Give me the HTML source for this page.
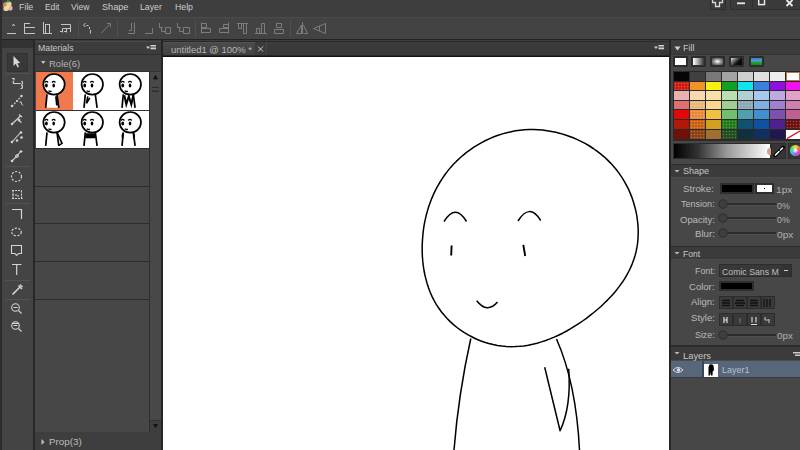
<!DOCTYPE html>
<html><head><meta charset="utf-8">
<style>
*{margin:0;padding:0;box-sizing:border-box}
html,body{width:800px;height:450px;overflow:hidden;background:#3a3a3a;font-family:"Liberation Sans",sans-serif;position:relative}
.a{position:absolute}
.t{position:absolute;white-space:nowrap;color:#d4d4d4;font-size:10px;line-height:12px;transform-origin:0 0}
svg{position:absolute;left:0;top:0}
</style></head><body>
<div class="a" style="left:0px;top:0px;width:800px;height:17px;background:#3e3e3e;"></div>
<div class="a" style="left:0px;top:17px;width:800px;height:1px;background:#4b4b4b;"></div>
<div class="t" style="left:19.00px;top:0.63px;font-size:9.5px;color:#cccccc;font-weight:400;transform:scaleX(0.933)">File</div>
<div class="t" style="left:44.50px;top:0.63px;font-size:9.5px;color:#cccccc;font-weight:400;transform:scaleX(0.882)">Edit</div>
<div class="t" style="left:71.00px;top:0.63px;font-size:9.5px;color:#cccccc;font-weight:400;transform:scaleX(0.905)">View</div>
<div class="t" style="left:102.00px;top:0.63px;font-size:9.5px;color:#cccccc;font-weight:400;transform:scaleX(0.963)">Shape</div>
<div class="t" style="left:140.00px;top:0.63px;font-size:9.5px;color:#cccccc;font-weight:400;transform:scaleX(0.917)">Layer</div>
<div class="t" style="left:174.60px;top:0.63px;font-size:9.5px;color:#cccccc;font-weight:400;transform:scaleX(0.920)">Help</div>
<svg width="14" height="14" style="left:1px;top:0px"><circle cx="5" cy="5" r="3" fill="#e0806a"/><circle cx="8" cy="4" r="2.6" fill="#d8e0a0"/><circle cx="9" cy="8" r="2.6" fill="#e8b0b0"/><circle cx="5" cy="8.5" r="2.6" fill="#e8d8a0"/><circle cx="7" cy="6.5" r="1.5" fill="#f0e0a0"/><circle cx="7" cy="1.5" r="1.3" fill="#50a050"/></svg>
<div class="a" style="left:710px;top:0px;width:16px;height:10px;background:#3a3a3a;border:1px solid #2e2e2e;border-top:none"></div>
<svg width="16" height="10" style="left:710px;top:0"><path d="M2.5 -1 V2.5 H5.5 V6.5 H9.5 V2.5 H12.5 V-1" stroke="#d8d8d8" stroke-width="1.3" fill="none"/></svg>
<div class="a" style="left:730px;top:0px;width:70px;height:10px;background:#3a3a3a;border:1px solid #2e2e2e;border-top:none;border-right:none;border-radius:0 0 0 3px"></div>
<div class="a" style="left:752px;top:0px;width:1px;height:10px;background:#2e2e2e;"></div>
<svg width="70" height="10" style="left:730px;top:0"><path d="M7 3.3 H15" stroke="#e8e8e8" stroke-width="1.8"/><rect x="28.7" y="-1" width="5.8" height="5.6" stroke="#e8e8e8" stroke-width="1.5" fill="none"/><path d="M56.5 0 L62.5 6 M62.5 0 L56.5 6" stroke="#e8e8e8" stroke-width="1.8"/></svg>
<div class="a" style="left:0px;top:18px;width:800px;height:21px;background:#434343;"></div>
<div class="a" style="left:0px;top:39px;width:800px;height:1px;background:#232323;"></div>
<div class="a" style="left:0px;top:0px;width:2px;height:450px;background:#2c2c2c;"></div>
<div class="a" style="left:78px;top:20px;width:1px;height:17px;background:#505050;"></div>
<div class="a" style="left:117px;top:20px;width:1px;height:17px;background:#505050;"></div>
<div class="a" style="left:195px;top:20px;width:1px;height:17px;background:#505050;"></div>
<div class="a" style="left:290px;top:20px;width:1px;height:17px;background:#505050;"></div>
<svg width="800" height="40"><path d="M7 33.5 H16 M12.5 26 L13.5 24 L14.5 26" stroke="#c4c4c4" fill="none"/><path d="M24.5 23 V34 M24 23.5 H30 M24 27.5 H35 M24 33.5 H35" stroke="#c4c4c4" fill="none"/><path d="M43.5 22 V34 M43 33.5 H52 M45 24.5 H50 M45.5 25 V33 M49.5 25 V33" stroke="#c4c4c4" fill="none"/><path d="M61 24.5 H70.5 V32 M62.5 28.5 H70 M62.5 28.5 V32.5 M66.5 28.5 V32.5 M60 31.5 H63 M64 31.5 H67" stroke="#c4c4c4" fill="none"/><path d="M85.5 23 L83.5 25 L85.5 27" stroke="#c4c4c4" fill="none"/><path d="M86.5 25.5 H88.5 M89.5 27 V29 M90.5 30 V33.5" stroke="#c4c4c4" fill="none"/><path d="M101.5 33 L109.5 24.5 M107 23.5 H110.5 V27" stroke="#7c7c7c" fill="none"/><path d="M134.5 22.5 V33.5 H128 M131.5 23 V30.5 H129" stroke="#7c7c7c" fill="none"/><path d="M152.5 28 V33.5 H145" stroke="#7c7c7c" fill="none"/><path d="M159.5 23 V27.5 H163 M161.5 27 V31.5 H165 M165.5 27.5 H170.5 V33.5 H165.5 Z" stroke="#7c7c7c" fill="none"/><path d="M177.5 23 V27.5 H181 M179.5 27 V31.5 H183 M183.5 27.5 H189.5 V33.5 H183.5 Z" stroke="#7c7c7c" fill="none"/><path d="M201.5 22.5 V33.5 M202 23.5 H206.5 V27.5 H202 M202 28.5 H210.5 V32.5 H202" stroke="#7c7c7c" fill="none"/><path d="M228.5 22.5 V33.5 M228 24.5 H223.5 V27.5 H228 M228 28.5 H219.5 V32.5 H228" stroke="#7c7c7c" fill="none"/><path d="M237 23.5 H248 M238.5 24 V28.5 H241.5 V24 M243.5 24 V33.5 H246.5 V24" stroke="#7c7c7c" fill="none"/><path d="M255 33.5 H267 M256.5 33 V28.5 H259.5 V33 M261.5 33 V23.5 H264.5 V33" stroke="#7c7c7c" fill="none"/><path d="M276.5 23.5 H281.5 V27.5 H276.5 Z M274.5 29.5 H283.5 V33.5 H274.5 Z" stroke="#7c7c7c" fill="none"/><path d="M302.5 22 V34 M301.5 25 L296.5 33.5 H301.5 Z M303.5 25 L307.5 33.5 H303.5" stroke="#7c7c7c" fill="none"/><path d="M313.5 28.5 L325.5 23.5 V33.5 L313.5 28.5 Z M319.5 26 V31" stroke="#7c7c7c" fill="none"/></svg>
<div class="a" style="left:2px;top:40px;width:31px;height:8px;background:#333333;"></div>
<div class="a" style="left:2px;top:48px;width:31px;height:402px;background:#444444;"></div>
<div class="a" style="left:7px;top:53px;width:21px;height:19px;background:#383838;border:1px solid #323232"></div>
<div class="a" style="left:5px;top:72.5px;width:25px;height:1px;background:#525252"></div>
<div class="a" style="left:5px;top:166px;width:25px;height:1px;background:#525252"></div>
<div class="a" style="left:5px;top:203px;width:25px;height:1px;background:#525252"></div>
<div class="a" style="left:5px;top:280px;width:25px;height:1px;background:#525252"></div>
<div class="a" style="left:5px;top:299px;width:25px;height:1px;background:#525252"></div>
<svg width="40" height="450"><path d="M13.5 56 L13.5 66 L15.8 63.8 L17.6 67.5 L19 66.8 L17.3 63.2 L20.3 63 Z" fill="#d8d8d8"/><path d="M12 78.5 H14 V80.5 M13 81 Q14 82.5 13 83.5 M13 83.5 H20.5 M21.5 81 Q23.5 82.5 21.5 85 Q23.5 86 21.5 88.5 M20.5 88.5 h2" stroke="#d4d4d4" fill="none" stroke-width="1.2"/><path d="M12 106.5 L21 96.5" stroke="#d4d4d4" stroke-width="1.1" stroke-dasharray="2 1.2" fill="none"/><circle cx="12" cy="106" r="1.2" fill="#d4d4d4"/><circle cx="21.5" cy="96" r="1.2" fill="#d4d4d4"/><circle cx="17" cy="101" r="1.1" fill="#d4d4d4"/><path d="M19.5 102 Q22 101 21.5 104 L23 105.5" stroke="#d4d4d4" stroke-width="1" fill="none"/><path d="M12 124 L20.5 116" stroke="#d4d4d4" stroke-width="1.1" fill="none"/><circle cx="12" cy="124" r="1.2" fill="#d4d4d4"/><path d="M19 114.5 L22 117 M18 120 L21.5 122.5" stroke="#d4d4d4" stroke-width="1.2" fill="none"/><circle cx="19" cy="120" r="1.3" fill="#d4d4d4"/><path d="M12 142 L21 132" stroke="#d4d4d4" stroke-width="1.1" fill="none"/><circle cx="12" cy="142" r="1.3" fill="#d4d4d4"/><circle cx="21" cy="132.5" r="1.3" fill="#d4d4d4"/><circle cx="21.5" cy="137.5" r="1.3" fill="#d4d4d4"/><circle cx="17" cy="140.5" r="1.3" fill="#d4d4d4"/><path d="M12 161 L17 156 L21 151" stroke="#d4d4d4" stroke-width="1.1" fill="none"/><circle cx="12" cy="161" r="1.3" fill="#d4d4d4"/><circle cx="17" cy="156" r="1.4" fill="none" stroke="#d4d4d4"/><path d="M21 150 V153 M19.5 151.5 H22.5" stroke="#d4d4d4" fill="none"/><circle cx="16.5" cy="176.5" r="5" stroke="#d4d4d4" stroke-width="1.2" stroke-dasharray="2 1.6" fill="none"/><path d="M12 190.5 H21.5 M21.5 190.5 V198 M12 195 H18 V198 M12 198.5 H22.5 M13 190.5 V199" stroke="#d4d4d4" stroke-width="1.1" stroke-dasharray="2 1" fill="none"/><path d="M12 209.5 H21.5 V219" stroke="#d4d4d4" stroke-width="1.2" fill="none"/><ellipse cx="16.5" cy="232" rx="4.8" ry="3.8" stroke="#d4d4d4" stroke-width="1.2" stroke-dasharray="2.2 1.4" fill="none"/><path d="M11.5 245.5 H21.5 V253.5 H18.5 L16.5 255.5 L15 253.5 H11.5 Z" stroke="#d4d4d4" stroke-width="1.1" fill="none"/><path d="M12 264.5 H21.5 M16.7 264.5 V275" stroke="#d4d4d4" stroke-width="1.2" fill="none"/><path d="M12.5 294.5 L19.5 287.5 M18.5 285.5 L22 289" stroke="#d4d4d4" stroke-width="1.6" fill="none"/><path d="M20 284.5 L22.5 287" stroke="#d4d4d4" stroke-width="1.3"/><circle cx="15.5" cy="307.5" r="3.8" stroke="#d4d4d4" stroke-width="1.1" fill="none"/><path d="M13.5 307.5 H17.5 M18.5 310.5 L21.5 313.5" stroke="#d4d4d4" stroke-width="1.1" fill="none"/><circle cx="15.5" cy="325.5" r="3.8" stroke="#d4d4d4" stroke-width="1.1" fill="none"/><path d="M13.5 325.5 H17.5 M12 323.5 H19 M18.5 328.5 L21.5 331.5" stroke="#d4d4d4" stroke-width="1.1" fill="none"/></svg>
<div class="a" style="left:33px;top:40px;width:2px;height:410px;background:#282828;"></div>
<div class="a" style="left:35px;top:41px;width:126px;height:14px;background:#3c3c3c;border-top:1px solid #4a4a4a;border-bottom:1px solid #2e2e2e"></div>
<div class="t" style="left:38.00px;top:42.44px;font-size:9px;color:#c8c8c8;font-weight:400;transform:scaleX(0.973)">Materials</div>
<svg width="20" height="20" style="left:140px;top:38px"><path d="M6 8.5 H10 L8 11 Z" fill="#d0d0d0"/><rect x="10.5" y="7" width="5.5" height="1.5" fill="#d0d0d0"/><rect x="10.5" y="9.5" width="5.5" height="1.8" fill="#d0d0d0"/></svg>
<div class="a" style="left:35px;top:55px;width:126px;height:17px;background:#3f3f3f;border-bottom:1px solid #333"></div>
<svg width="10" height="10" style="left:39px;top:58px"><path d="M2 3 H6.5 L4.2 6 Z" fill="#c0c0c0"/></svg>
<div class="t" style="left:49.00px;top:57.63px;font-size:9.5px;color:#b4b4b4;font-weight:400;transform:scaleX(1.000)">Role(6)</div>
<div class="a" style="left:35px;top:72px;width:115px;height:378px;background:#474747;"></div>
<div class="a" style="left:35px;top:186px;width:115px;height:1px;background:#2c2c2c;"></div>
<div class="a" style="left:35px;top:223px;width:115px;height:1px;background:#2c2c2c;"></div>
<div class="a" style="left:35px;top:261px;width:115px;height:1px;background:#2c2c2c;"></div>
<div class="a" style="left:35px;top:299px;width:115px;height:1px;background:#2c2c2c;"></div>
<div class="a" style="left:36px;top:72px;width:113px;height:77px;background:#ffffff;"></div>
<div class="a" style="left:36px;top:72px;width:37px;height:38px;background:#f07a4e;"></div>
<div class="a" style="left:36px;top:110px;width:113px;height:1px;background:#333333;"></div>
<div class="a" style="left:35px;top:148px;width:115px;height:1px;background:#2c2c2c;"></div>
<svg width="160" height="160"><path d="M47 94.3 L45.7 107.8 L58.8 107.8 L57 94.3 Z" fill="#fff"/><path d="M47 94.3 L45.7 107.8 M57 94.3 L58.8 107.8" stroke="#000" stroke-width="1.7" fill="none"/><ellipse cx="54" cy="84.3" rx="10.7" ry="10.3" fill="#fff" stroke="#000" stroke-width="1.7"/><ellipse cx="46.4" cy="85.5" rx="1.4" ry="2.1" fill="#000"/><ellipse cx="53.7" cy="85.5" rx="1.3" ry="2.1" fill="#000"/><path d="M44.7 82.5 q1.7 -2.2 3.4 0 M52 82.5 q1.7 -2.2 3.4 0" stroke="#000" stroke-width="1.3" fill="none"/><path d="M48.5 90.6 q1.2 1.5 3 0.5" stroke="#000" stroke-width="1.3" fill="none"/><path d="M56 96.3 L57 105.3" stroke="#000" stroke-width="2"/><path d="M85.3 94.3 L84.0 107.8 L97.1 107.8 L95.3 94.3 Z" fill="#fff"/><path d="M85.3 94.3 L84.0 107.8 M95.3 94.3 L97.1 107.8" stroke="#000" stroke-width="1.7" fill="none"/><ellipse cx="92.3" cy="84.3" rx="10.7" ry="10.3" fill="#fff" stroke="#000" stroke-width="1.7"/><ellipse cx="84.7" cy="85.5" rx="1.4" ry="2.1" fill="#000"/><ellipse cx="92.0" cy="85.5" rx="1.3" ry="2.1" fill="#000"/><path d="M83.0 82.5 q1.7 -2.2 3.4 0 M90.3 82.5 q1.7 -2.2 3.4 0" stroke="#000" stroke-width="1.3" fill="none"/><path d="M86.8 90.6 q1.2 1.5 3 0.5" stroke="#000" stroke-width="1.3" fill="none"/><path d="M87.8 96.3 L86.5 103.3 L89.8 97.8" stroke="#000" stroke-width="1.6" fill="none"/><path d="M123.30000000000001 94.3 L122.00000000000001 107.8 L135.10000000000002 107.8 L133.3 94.3 Z" fill="#fff"/><path d="M123.30000000000001 94.3 L122.00000000000001 107.8 M133.3 94.3 L135.10000000000002 107.8" stroke="#000" stroke-width="1.7" fill="none"/><ellipse cx="130.3" cy="84.3" rx="10.7" ry="10.3" fill="#fff" stroke="#000" stroke-width="1.7"/><ellipse cx="122.70000000000002" cy="85.5" rx="1.4" ry="2.1" fill="#000"/><ellipse cx="130.0" cy="85.5" rx="1.3" ry="2.1" fill="#000"/><path d="M121.00000000000001 82.5 q1.7 -2.2 3.4 0 M128.3 82.5 q1.7 -2.2 3.4 0" stroke="#000" stroke-width="1.3" fill="none"/><path d="M124.80000000000001 90.6 q1.2 1.5 3 0.5" stroke="#000" stroke-width="1.3" fill="none"/><path d="M124.30000000000001 95.3 L126.30000000000001 104.3 L128.8 96.3 L131.3 104.3 L133.3 95.3" stroke="#000" stroke-width="2" fill="none"/><path d="M47 132.3 L45.7 145.8 L58.8 145.8 L57 132.3 Z" fill="#fff"/><path d="M47 132.3 L45.7 145.8 M57 132.3 L58.8 145.8" stroke="#000" stroke-width="1.7" fill="none"/><ellipse cx="54" cy="122.3" rx="10.7" ry="10.3" fill="#fff" stroke="#000" stroke-width="1.7"/><ellipse cx="46.4" cy="123.5" rx="1.4" ry="2.1" fill="#000"/><ellipse cx="53.7" cy="123.5" rx="1.3" ry="2.1" fill="#000"/><path d="M44.7 120.5 q1.7 -2.2 3.4 0 M52 120.5 q1.7 -2.2 3.4 0" stroke="#000" stroke-width="1.3" fill="none"/><path d="M48.5 128.6 q1.2 1.5 3 0.5" stroke="#000" stroke-width="1.3" fill="none"/><path d="M57 132.3 L62 143.3 L59 145.3" stroke="#000" stroke-width="1.6" fill="none"/><path d="M85.3 132.3 L84.0 145.8 L97.1 145.8 L95.3 132.3 Z" fill="#fff"/><path d="M85.3 132.3 L84.0 145.8 M95.3 132.3 L97.1 145.8" stroke="#000" stroke-width="1.7" fill="none"/><ellipse cx="92.3" cy="122.3" rx="10.7" ry="10.3" fill="#fff" stroke="#000" stroke-width="1.7"/><ellipse cx="84.7" cy="123.5" rx="1.4" ry="2.1" fill="#000"/><ellipse cx="92.0" cy="123.5" rx="1.3" ry="2.1" fill="#000"/><path d="M83.0 120.5 q1.7 -2.2 3.4 0 M90.3 120.5 q1.7 -2.2 3.4 0" stroke="#000" stroke-width="1.3" fill="none"/><path d="M86.8 128.6 q1.2 1.5 3 0.5" stroke="#000" stroke-width="1.3" fill="none"/><rect x="85.3" y="133.3" width="10" height="5" fill="#000"/><path d="M123.30000000000001 132.3 L122.00000000000001 145.8 L135.10000000000002 145.8 L133.3 132.3 Z" fill="#fff"/><path d="M123.30000000000001 132.3 L122.00000000000001 145.8 M133.3 132.3 L135.10000000000002 145.8" stroke="#000" stroke-width="1.7" fill="none"/><ellipse cx="130.3" cy="122.3" rx="10.7" ry="10.3" fill="#fff" stroke="#000" stroke-width="1.7"/><ellipse cx="122.70000000000002" cy="123.5" rx="1.4" ry="2.1" fill="#000"/><ellipse cx="130.0" cy="123.5" rx="1.3" ry="2.1" fill="#000"/><path d="M121.00000000000001 120.5 q1.7 -2.2 3.4 0 M128.3 120.5 q1.7 -2.2 3.4 0" stroke="#000" stroke-width="1.3" fill="none"/><path d="M124.80000000000001 128.6 q1.2 1.5 3 0.5" stroke="#000" stroke-width="1.3" fill="none"/><path d="M123.30000000000001 133.3 q-2 3 0 5 M133.3 133.3 q2 3 0 5" stroke="#000" stroke-width="1.6" fill="none"/></svg>
<div class="a" style="left:149px;top:72px;width:1px;height:360px;background:#2e2e2e;"></div>
<div class="a" style="left:150px;top:72px;width:11px;height:360px;background:#484848;"></div>
<svg width="12" height="30" style="left:150px;top:72px"><path d="M3.5 7 H7.5 L5.5 3.5 Z" fill="#111" stroke="#111" stroke-width="0.8"/><rect x="2" y="15" width="7" height="1" fill="#2a2a2a"/><rect x="2" y="18.5" width="7" height="1.3" fill="#2a2a2a"/></svg>
<div class="a" style="left:150px;top:420px;width:11px;height:12px;background:#3e3e3e;border-top:1px solid #333"></div>
<svg width="12" height="12" style="left:150px;top:420px"><path d="M3.5 4.5 H7.5 L5.5 7.5 Z" fill="#111" stroke="#111" stroke-width="0.8"/></svg>
<div class="a" style="left:35px;top:432px;width:126px;height:18px;background:#3e3e3e;"></div>
<svg width="10" height="12" style="left:39px;top:437px"><path d="M2.5 2 V8 L5.5 5 Z" fill="#c0c0c0"/></svg>
<div class="t" style="left:49.00px;top:435.63px;font-size:9.5px;color:#bcbcbc;font-weight:400;transform:scaleX(1.032)">Prop(3)</div>
<div class="a" style="left:161px;top:40px;width:2px;height:410px;background:#262626;"></div>
<div class="a" style="left:163px;top:40px;width:506px;height:1px;background:#3c3c3c;"></div>
<div class="a" style="left:163px;top:41px;width:506px;height:1px;background:#2a2a2a;"></div>
<div class="a" style="left:163px;top:42px;width:506px;height:13px;background:linear-gradient(#3c3c3c,#373737);"></div>
<div class="a" style="left:163px;top:42px;width:104px;height:13px;background:linear-gradient(#4a4a4a,#424242);border-top:1px solid #505050"></div>
<div class="t" style="left:170.50px;top:43.63px;font-size:9.5px;color:#b8b8b8;font-weight:400;transform:scaleX(0.994)">untitled1 @ 100% *</div>
<div class="a" style="left:255px;top:42px;width:11px;height:13px;background:#3b3b3b;"></div>
<svg width="12" height="12" style="left:255px;top:43px"><path d="M3 3.5 L8 8.5 M8 3.5 L3 8.5" stroke="#c8c8c8" stroke-width="1"/></svg>
<svg width="20" height="20" style="left:648px;top:38px"><path d="M6 8.5 H10 L8 11 Z" fill="#d0d0d0"/><rect x="10.5" y="7" width="5.5" height="1.5" fill="#d0d0d0"/><rect x="10.5" y="9.5" width="5.5" height="1.8" fill="#d0d0d0"/></svg>
<div class="a" style="left:163px;top:55px;width:506px;height:1px;background:#262626;"></div>
<div class="a" style="left:163px;top:56px;width:506px;height:1px;background:#111111;"></div>
<div class="a" style="left:163px;top:57px;width:506px;height:393px;background:#ffffff;"></div>
<svg width="800" height="450" style="left:0;top:0"><path d="M520.0 130.2 L524.5 129.8 L529.0 129.6 L533.5 129.6 L538.0 129.7 L542.5 130.1 L547.0 130.7 L551.5 131.4 L555.9 132.3 L560.3 133.4 L564.7 134.7 L569.0 136.2 L573.2 137.8 L577.4 139.6 L581.5 141.6 L585.5 143.7 L589.5 146.0 L593.3 148.5 L597.0 151.1 L600.6 153.9 L604.1 156.8 L607.4 159.9 L610.6 163.1 L613.7 166.5 L616.6 170.0 L619.3 173.6 L621.9 177.4 L624.3 181.3 L626.5 185.3 L628.6 189.4 L630.4 193.6 L632.1 197.9 L633.5 202.3 L634.8 206.7 L635.9 211.1 L636.8 215.6 L637.4 220.1 L637.9 224.6 L638.2 229.1 L638.2 233.6 L638.0 238.1 L637.7 242.5 L637.0 246.9 L636.2 251.2 L635.1 255.4 L633.8 259.5 L632.3 263.6 L630.6 267.6 L628.7 271.5 L626.6 275.3 L624.4 279.1 L621.9 282.8 L619.3 286.4 L616.6 289.9 L613.7 293.4 L610.7 296.8 L607.5 300.1 L604.2 303.3 L600.9 306.5 L597.4 309.5 L593.8 312.5 L590.1 315.4 L586.4 318.3 L582.6 321.0 L578.7 323.7 L574.7 326.2 L570.7 328.7 L566.7 331.0 L562.6 333.2 L558.4 335.2 L554.2 337.1 L549.9 338.9 L545.7 340.5 L541.4 341.9 L537.0 343.2 L532.7 344.3 L528.3 345.2 L523.9 345.9 L519.5 346.3 L515.1 346.6 L510.7 346.7 L506.3 346.5 L501.9 346.1 L497.5 345.5 L493.1 344.6 L488.8 343.5 L484.6 342.2 L480.3 340.7 L476.2 339.0 L472.2 337.0 L468.2 334.9 L464.4 332.6 L460.6 330.1 L457.0 327.5 L453.5 324.6 L450.2 321.6 L447.1 318.5 L444.1 315.1 L441.3 311.7 L438.7 308.0 L436.2 304.3 L434.0 300.4 L432.0 296.4 L430.2 292.3 L428.6 288.1 L427.2 283.8 L426.0 279.4 L424.9 275.0 L424.0 270.5 L423.3 265.9 L422.8 261.4 L422.4 256.8 L422.2 252.2 L422.2 247.5 L422.3 242.9 L422.6 238.3 L423.0 233.8 L423.5 229.2 L424.2 224.7 L425.1 220.2 L426.1 215.8 L427.3 211.4 L428.6 207.0 L430.1 202.8 L431.7 198.6 L433.5 194.4 L435.4 190.4 L437.5 186.4 L439.8 182.5 L442.2 178.7 L444.7 175.0 L447.4 171.4 L450.2 167.9 L453.2 164.6 L456.3 161.4 L459.6 158.3 L463.0 155.3 L466.5 152.4 L470.1 149.8 L473.9 147.2 L477.7 144.8 L481.6 142.6 L485.6 140.5 L489.7 138.6 L493.9 136.8 L498.1 135.3 L502.4 133.9 L506.7 132.7 L511.1 131.7 L515.5 130.8 L520.0 130.2Z" stroke="#000" stroke-width="1.5" fill="none" stroke-linejoin="round"/><path d="M444 221.5 Q455.5 203 466.5 221.5" stroke="#000" stroke-width="1.5" fill="none"/><path d="M518 221 Q529.5 202.5 540.7 220.5" stroke="#000" stroke-width="1.5" fill="none"/><path d="M451.6 245.5 L451.2 255.5 M523.3 244.8 L525.2 256" stroke="#000" stroke-width="1.9" fill="none" stroke-linejoin="round"/><path d="M476.7 300.7 Q487.3 314 497.5 302" stroke="#000" stroke-width="1.6" fill="none"/><path d="M470.8 338.5 C466 360 458 400 454 450" stroke="#000" stroke-width="1.5" fill="none" stroke-linejoin="round"/><path d="M556.5 339 C568 365 577 400 579.5 450" stroke="#000" stroke-width="1.5" fill="none" stroke-linejoin="round"/><path d="M544.7 367.3 L560.1 430.8 C566 418 571 400 568.7 368.7" stroke="#000" stroke-width="1.5" fill="none" stroke-linejoin="round"/></svg>
<div class="a" style="left:669px;top:40px;width:2px;height:410px;background:#262626;"></div>
<div class="a" style="left:671px;top:41px;width:129px;height:409px;background:#474747;"></div>
<div class="a" style="left:671px;top:41px;width:129px;height:13px;background:#3c3c3c;"></div>
<svg width="10" height="10" style="left:673px;top:44px"><path d="M1.5 2.5 H7.5 L4.5 6.5 Z" fill="#d0d0d0"/></svg>
<div class="t" style="left:683.00px;top:42.44px;font-size:9px;color:#c8c8c8;font-weight:400;transform:scaleX(1.000)">Fill</div>
<div class="a" style="left:671px;top:54px;width:129px;height:1px;background:#353535;"></div>
<div class="a" style="left:673px;top:56px;width:15px;height:11px;background:#2e2e2e;border:1px solid #2a2a2a;border-radius:1px"></div>
<div class="a" style="left:675px;top:58px;width:11px;height:7px;background:#ffffff"></div>
<div class="a" style="left:691px;top:56px;width:15px;height:11px;background:#2e2e2e;border:1px solid #2a2a2a;border-radius:1px"></div>
<div class="a" style="left:693px;top:58px;width:11px;height:7px;background:linear-gradient(90deg,#fff,#aaa 45%,#333)"></div>
<div class="a" style="left:710px;top:56px;width:15px;height:11px;background:#2e2e2e;border:1px solid #2a2a2a;border-radius:1px"></div>
<div class="a" style="left:712px;top:58px;width:11px;height:7px;background:radial-gradient(ellipse at center,#fff 0%,#999 45%,#333 100%)"></div>
<div class="a" style="left:729px;top:56px;width:15px;height:11px;background:#2e2e2e;border:1px solid #2a2a2a;border-radius:1px"></div>
<div class="a" style="left:731px;top:58px;width:11px;height:7px;background:linear-gradient(135deg,#ddd 0%,#111 60%,#000)"></div>
<div class="a" style="left:749px;top:56px;width:15px;height:11px;background:#2e2e2e;border:1px solid #2a2a2a;border-radius:1px"></div>
<div class="a" style="left:751px;top:58px;width:11px;height:7px;background:linear-gradient(180deg,#3a7ad0 0%,#4aa0e0 40%,#30a030 60%,#208020 100%)"></div>
<div class="a" style="left:673px;top:71px;width:127px;height:70px;background:#2a2a2a;"></div>
<div class="a" style="left:674px;top:72px;width:15px;height:9px;background:#060606;"></div>
<div class="a" style="left:690px;top:72px;width:15px;height:9px;background:#404040;"></div>
<div class="a" style="left:706px;top:72px;width:15px;height:9px;background:#787878;"></div>
<div class="a" style="left:722px;top:72px;width:15px;height:9px;background:#a4a4a4;"></div>
<div class="a" style="left:738px;top:72px;width:15px;height:9px;background:#cfcfcf;"></div>
<div class="a" style="left:754px;top:72px;width:15px;height:9px;background:#e0e0e0;"></div>
<div class="a" style="left:770px;top:72px;width:15px;height:9px;background:#eeeeee;"></div>
<div class="a" style="left:786px;top:72px;width:14px;height:9px;background:#ffffff;"></div>
<div class="a" style="left:674px;top:82px;width:15px;height:8px;background:#d41c14;background-image:radial-gradient(rgba(255,230,160,0.28) 0.6px,transparent 1.1px),radial-gradient(rgba(0,0,0,0.18) 0.6px,transparent 1.1px);background-size:3px 3px,3px 3px;background-position:0 0,1.5px 1.5px"></div>
<div class="a" style="left:690px;top:82px;width:15px;height:8px;background:#f09428;"></div>
<div class="a" style="left:706px;top:82px;width:15px;height:8px;background:#f8ee10;"></div>
<div class="a" style="left:722px;top:82px;width:15px;height:8px;background:#10a024;"></div>
<div class="a" style="left:738px;top:82px;width:15px;height:8px;background:#10e4ec;"></div>
<div class="a" style="left:754px;top:82px;width:15px;height:8px;background:#3a80e0;"></div>
<div class="a" style="left:770px;top:82px;width:15px;height:8px;background:#9010e0;"></div>
<div class="a" style="left:786px;top:82px;width:14px;height:8px;background:#f010f0;"></div>
<div class="a" style="left:674px;top:91px;width:15px;height:9px;background:#e8b0b0;"></div>
<div class="a" style="left:690px;top:91px;width:15px;height:9px;background:#f8d8b0;"></div>
<div class="a" style="left:706px;top:91px;width:15px;height:9px;background:#f8e0a8;"></div>
<div class="a" style="left:722px;top:91px;width:15px;height:9px;background:#b8e0b0;"></div>
<div class="a" style="left:738px;top:91px;width:15px;height:9px;background:#b0d0d4;"></div>
<div class="a" style="left:754px;top:91px;width:15px;height:9px;background:#a8c8f0;"></div>
<div class="a" style="left:770px;top:91px;width:15px;height:9px;background:#c0a8e0;"></div>
<div class="a" style="left:786px;top:91px;width:14px;height:9px;background:#e0a0c8;"></div>
<div class="a" style="left:674px;top:101px;width:15px;height:8px;background:#e07070;"></div>
<div class="a" style="left:690px;top:101px;width:15px;height:8px;background:#f0c080;background-image:radial-gradient(rgba(255,230,160,0.28) 0.6px,transparent 1.1px),radial-gradient(rgba(0,0,0,0.18) 0.6px,transparent 1.1px);background-size:3px 3px,3px 3px;background-position:0 0,1.5px 1.5px"></div>
<div class="a" style="left:706px;top:101px;width:15px;height:8px;background:#f8d890;"></div>
<div class="a" style="left:722px;top:101px;width:15px;height:8px;background:#a0d090;"></div>
<div class="a" style="left:738px;top:101px;width:15px;height:8px;background:#90b0c0;background-image:radial-gradient(rgba(255,230,160,0.28) 0.6px,transparent 1.1px),radial-gradient(rgba(0,0,0,0.18) 0.6px,transparent 1.1px);background-size:3px 3px,3px 3px;background-position:0 0,1.5px 1.5px"></div>
<div class="a" style="left:754px;top:101px;width:15px;height:8px;background:#80b0e0;"></div>
<div class="a" style="left:770px;top:101px;width:15px;height:8px;background:#a080d0;"></div>
<div class="a" style="left:786px;top:101px;width:14px;height:8px;background:#d080b0;"></div>
<div class="a" style="left:674px;top:110px;width:15px;height:9px;background:#e00808;"></div>
<div class="a" style="left:690px;top:110px;width:15px;height:9px;background:#f09040;background-image:radial-gradient(rgba(255,230,160,0.28) 0.6px,transparent 1.1px),radial-gradient(rgba(0,0,0,0.18) 0.6px,transparent 1.1px);background-size:3px 3px,3px 3px;background-position:0 0,1.5px 1.5px"></div>
<div class="a" style="left:706px;top:110px;width:15px;height:9px;background:#f0c040;"></div>
<div class="a" style="left:722px;top:110px;width:15px;height:9px;background:#70c070;"></div>
<div class="a" style="left:738px;top:110px;width:15px;height:9px;background:#50a0b0;"></div>
<div class="a" style="left:754px;top:110px;width:15px;height:9px;background:#4090d0;"></div>
<div class="a" style="left:770px;top:110px;width:15px;height:9px;background:#8050b0;"></div>
<div class="a" style="left:786px;top:110px;width:14px;height:9px;background:#c06090;"></div>
<div class="a" style="left:674px;top:120px;width:15px;height:9px;background:#b01808;"></div>
<div class="a" style="left:690px;top:120px;width:15px;height:9px;background:#d06414;background-image:radial-gradient(rgba(255,230,160,0.28) 0.6px,transparent 1.1px),radial-gradient(rgba(0,0,0,0.18) 0.6px,transparent 1.1px);background-size:3px 3px,3px 3px;background-position:0 0,1.5px 1.5px"></div>
<div class="a" style="left:706px;top:120px;width:15px;height:9px;background:#d0a020;"></div>
<div class="a" style="left:722px;top:120px;width:15px;height:9px;background:#208020;background-image:radial-gradient(rgba(255,230,160,0.28) 0.6px,transparent 1.1px),radial-gradient(rgba(0,0,0,0.18) 0.6px,transparent 1.1px);background-size:3px 3px,3px 3px;background-position:0 0,1.5px 1.5px"></div>
<div class="a" style="left:738px;top:120px;width:15px;height:9px;background:#105070;"></div>
<div class="a" style="left:754px;top:120px;width:15px;height:9px;background:#1050a0;"></div>
<div class="a" style="left:770px;top:120px;width:15px;height:9px;background:#502090;"></div>
<div class="a" style="left:786px;top:120px;width:14px;height:9px;background:#701010;background-image:radial-gradient(rgba(255,230,160,0.28) 0.6px,transparent 1.1px),radial-gradient(rgba(0,0,0,0.18) 0.6px,transparent 1.1px);background-size:3px 3px,3px 3px;background-position:0 0,1.5px 1.5px"></div>
<div class="a" style="left:674px;top:130px;width:15px;height:9px;background:#701008;"></div>
<div class="a" style="left:690px;top:130px;width:15px;height:9px;background:#904414;background-image:radial-gradient(rgba(255,230,160,0.28) 0.6px,transparent 1.1px),radial-gradient(rgba(0,0,0,0.18) 0.6px,transparent 1.1px);background-size:3px 3px,3px 3px;background-position:0 0,1.5px 1.5px"></div>
<div class="a" style="left:706px;top:130px;width:15px;height:9px;background:#a07030;"></div>
<div class="a" style="left:722px;top:130px;width:15px;height:9px;background:#205020;background-image:radial-gradient(rgba(255,230,160,0.28) 0.6px,transparent 1.1px),radial-gradient(rgba(0,0,0,0.18) 0.6px,transparent 1.1px);background-size:3px 3px,3px 3px;background-position:0 0,1.5px 1.5px"></div>
<div class="a" style="left:738px;top:130px;width:15px;height:9px;background:#103040;"></div>
<div class="a" style="left:754px;top:130px;width:15px;height:9px;background:#103060;"></div>
<div class="a" style="left:770px;top:130px;width:15px;height:9px;background:#201850;"></div>
<div class="a" style="left:786px;top:130px;width:14px;height:9px;background:#ffffff;"></div>
<div class="a" style="left:786px;top:72px;width:14px;height:9px;background:#ffffff;border:1px solid #c07040"></div>
<svg width="14" height="9" style="left:786px;top:130px"><path d="M1 8.5 L14 1" stroke="#e01010" stroke-width="1.4"/></svg>
<div class="a" style="left:673px;top:143px;width:98px;height:16px;background:#2c2c2c;"></div>
<div class="a" style="left:674px;top:144px;width:96px;height:14px;background:linear-gradient(90deg,#000 0%,#333 25%,#999 55%,#fff 100%);"></div>
<div class="a" style="left:767px;top:148px;width:6px;height:7px;border-radius:50%;background:#d8a088"></div>
<div class="a" style="left:771px;top:143px;width:15px;height:16px;background:#363636;border:1px solid #2c2c2c"></div>
<svg width="16" height="16" style="left:771px;top:143px"><path d="M4 12.5 L12 4.5" stroke="#000" stroke-width="3.6" stroke-linecap="round"/><path d="M4.5 12 L8 8.5 M9.5 7 L11.5 5" stroke="#fff" stroke-width="1.6" stroke-linecap="round"/></svg>
<div class="a" style="left:788px;top:143px;width:12px;height:16px;background:#363636;border:1px solid #2c2c2c;border-right:none"></div>
<div class="a" style="left:790px;top:145px;width:11px;height:11px;border-radius:50%;background:conic-gradient(#f0e040,#f07040,#f040c0,#a060f0,#40c0f0,#60e060,#f0e040)"></div><div class="a" style="left:793px;top:148px;width:5px;height:5px;border-radius:50%;background:radial-gradient(#fff,rgba(255,255,255,0))"></div>
<div class="a" style="left:671px;top:164px;width:129px;height:1px;background:#2c2c2c;"></div>
<div class="a" style="left:671px;top:165px;width:129px;height:12px;background:#3b3b3b;"></div>
<div class="a" style="left:671px;top:177px;width:129px;height:1px;background:#4c4c4c;"></div>
<svg width="10" height="10" style="left:673px;top:167px"><path d="M1.5 3 H6.5 L4 5.5 Z" fill="#b8b8b8"/></svg>
<div class="t" style="left:683.00px;top:164.94px;font-size:9px;color:#c8c8c8;font-weight:400;transform:scaleX(1.000)">Shape</div>
<div class="t" style="left:683.30px;top:182.93px;font-size:9.5px;color:#bababa;font-weight:400;transform:scaleX(1.023)">Stroke:</div>
<div class="a" style="left:720px;top:183px;width:34px;height:11px;background:#2e2e2e;"></div>
<div class="a" style="left:722px;top:185px;width:30px;height:7px;background:#000000;"></div>
<div class="a" style="left:755px;top:183px;width:19px;height:11px;background:#2e2e2e;"></div>
<div class="a" style="left:757px;top:185px;width:15px;height:7px;background:#ffffff;"></div>
<div class="a" style="left:764px;top:188px;width:1px;height:1px;background:#000;"></div>
<div class="t" style="left:775.93px;top:183.63px;font-size:9.5px;color:#b0b0b0;font-weight:400;transform:scaleX(1.071)">1px</div>
<div class="t" style="left:680.70px;top:198.33px;font-size:9.5px;color:#bababa;font-weight:400;transform:scaleX(0.951)">Tension:</div>
<div class="a" style="left:726px;top:203px;width:50px;height:2px;background:#2c2c2c;"></div>
<div class="a" style="left:726px;top:205px;width:50px;height:1px;background:#505050;"></div>
<svg width="12" height="12" style="left:717px;top:198px"><circle cx="6" cy="6" r="4.3" fill="#3e3e3e" stroke="#2f2f2f" stroke-width="1"/></svg>
<div class="t" style="left:777.00px;top:199.63px;font-size:9.5px;color:#b0b0b0;font-weight:400;transform:scaleX(0.929)">0%</div>
<div class="t" style="left:680.00px;top:213.63px;font-size:9.5px;color:#bababa;font-weight:400;transform:scaleX(1.000)">Opacity:</div>
<div class="a" style="left:726px;top:217px;width:50px;height:2px;background:#2c2c2c;"></div>
<div class="a" style="left:726px;top:219px;width:50px;height:1px;background:#505050;"></div>
<svg width="12" height="12" style="left:717px;top:212px"><circle cx="6" cy="6" r="4.3" fill="#3e3e3e" stroke="#2f2f2f" stroke-width="1"/></svg>
<div class="t" style="left:777.00px;top:214.33px;font-size:9.5px;color:#b0b0b0;font-weight:400;transform:scaleX(0.929)">0%</div>
<div class="t" style="left:694.70px;top:228.33px;font-size:9.5px;color:#bababa;font-weight:400;transform:scaleX(1.016)">Blur:</div>
<div class="a" style="left:726px;top:232px;width:50px;height:2px;background:#2c2c2c;"></div>
<div class="a" style="left:726px;top:234px;width:50px;height:1px;background:#505050;"></div>
<svg width="12" height="12" style="left:717px;top:227px"><circle cx="6" cy="6" r="4.3" fill="#3e3e3e" stroke="#2f2f2f" stroke-width="1"/></svg>
<div class="t" style="left:777.00px;top:228.93px;font-size:9.5px;color:#b0b0b0;font-weight:400;transform:scaleX(1.067)">0px</div>
<div class="a" style="left:671px;top:246px;width:129px;height:1px;background:#2c2c2c;"></div>
<div class="a" style="left:671px;top:247px;width:129px;height:12px;background:#3b3b3b;"></div>
<div class="a" style="left:671px;top:259px;width:129px;height:1px;background:#4c4c4c;"></div>
<svg width="10" height="10" style="left:673px;top:249px"><path d="M1.5 3 H6.5 L4 5.5 Z" fill="#b8b8b8"/></svg>
<div class="t" style="left:683.00px;top:247.74px;font-size:9px;color:#c8c8c8;font-weight:400;transform:scaleX(0.944)">Font</div>
<div class="t" style="left:694.50px;top:265.13px;font-size:9.5px;color:#bababa;font-weight:400;transform:scaleX(0.929)">Font:</div>
<div class="a" style="left:719px;top:264px;width:73px;height:13px;background:#383838;border:1px solid #2c2c2c"></div>
<div class="t" style="left:722.00px;top:265.63px;font-size:9.5px;color:#bcbcbc;font-weight:400;transform:scaleX(0.918)">Comic Sans M</div>
<div class="a" style="left:780px;top:265px;width:11px;height:11px;background:#333;"></div>
<div class="a" style="left:784px;top:270px;width:4px;height:1px;background:#d0d0d0;"></div>
<div class="t" style="left:688.90px;top:281.23px;font-size:9.5px;color:#bababa;font-weight:400;transform:scaleX(1.004)">Color:</div>
<div class="a" style="left:719px;top:281px;width:35px;height:10px;background:#2e2e2e;"></div>
<div class="a" style="left:721px;top:283px;width:31px;height:6px;background:#000;"></div>
<div class="t" style="left:691.00px;top:296.33px;font-size:9.5px;color:#bababa;font-weight:400;transform:scaleX(1.000)">Align:</div>
<div class="a" style="left:719px;top:296px;width:14px;height:13px;background:#3a3a3a;border:1px solid #2c2c2c"></div>
<div class="a" style="left:733px;top:296px;width:14px;height:13px;background:#3a3a3a;border:1px solid #2c2c2c"></div>
<div class="a" style="left:747px;top:296px;width:14px;height:13px;background:#3a3a3a;border:1px solid #2c2c2c"></div>
<div class="a" style="left:761px;top:296px;width:14px;height:13px;background:#3a3a3a;border:1px solid #2c2c2c"></div>
<svg width="60" height="16" style="left:719px;top:296px"><path d="M3 4.5 H11 M3 7 H11 M3 9.5 H11 M17 4.5 H25 M16 7 H26 M17 9.5 H25 M31 4.5 H39 M31 7 H39 M31 9.5 H39 M45 3 V11 M48 3 V11 M51 3 V11" stroke="#111" stroke-width="1.3"/></svg>
<div class="t" style="left:690.80px;top:312.33px;font-size:9.5px;color:#bababa;font-weight:400;transform:scaleX(1.009)">Style:</div>
<div class="a" style="left:719px;top:313px;width:14px;height:13px;background:#3a3a3a;border:1px solid #2c2c2c"></div>
<div class="a" style="left:733px;top:313px;width:14px;height:13px;background:#3a3a3a;border:1px solid #2c2c2c"></div>
<div class="a" style="left:747px;top:313px;width:14px;height:13px;background:#3a3a3a;border:1px solid #2c2c2c"></div>
<div class="a" style="left:761px;top:313px;width:14px;height:13px;background:#3a3a3a;border:1px solid #2c2c2c"></div>
<svg width="60" height="16" style="left:719px;top:313px"><path d="M5 4 V10 M8 4 V10 M5 7 H8" stroke="#ddd" stroke-width="1.2"/><path d="M21 5 V10" stroke="#777" stroke-width="1"/><path d="M33 4 V9.5 M37 4 V9.5 M32 11.5 H38" stroke="#ddd" stroke-width="1.1"/><path d="M46 4 V7 M50 6 V10 M46 7 H50" stroke="#bbb" stroke-width="1.1"/></svg>
<div class="t" style="left:694.50px;top:329.33px;font-size:9.5px;color:#bababa;font-weight:400;transform:scaleX(0.929)">Size:</div>
<div class="a" style="left:726px;top:334px;width:50px;height:2px;background:#2c2c2c;"></div>
<div class="a" style="left:726px;top:336px;width:50px;height:1px;background:#505050;"></div>
<svg width="12" height="12" style="left:717px;top:329px"><circle cx="6" cy="6" r="4.3" fill="#3e3e3e" stroke="#2f2f2f" stroke-width="1"/></svg>
<div class="t" style="left:777.00px;top:329.83px;font-size:9.5px;color:#b0b0b0;font-weight:400;transform:scaleX(1.033)">0px</div>
<div class="a" style="left:671px;top:360px;width:129px;height:17px;background:#57667b;"></div>
<div class="a" style="left:702px;top:360px;width:2px;height:17px;background:#3a4555;"></div>
<div class="a" style="left:671px;top:345px;width:129px;height:2px;background:#2c2c2c;"></div>
<div class="a" style="left:671px;top:347px;width:129px;height:13px;background:#3b3b3b;"></div>
<div class="a" style="left:671px;top:360px;width:129px;height:1px;background:#4c4c4c;"></div>
<svg width="10" height="10" style="left:673px;top:349px"><path d="M1.5 3 H6.5 L4 5.5 Z" fill="#b8b8b8"/></svg>
<div class="t" style="left:683.00px;top:350.44px;font-size:9px;color:#c8c8c8;font-weight:400;transform:scaleX(1.037)">Layers</div>
<svg width="10" height="10" style="left:792px;top:351px"><rect x="1" y="1" width="8" height="1.5" fill="#ccc"/><rect x="3" y="3.5" width="6" height="1.5" fill="#ccc"/></svg>
<div class="a" style="left:704px;top:363.5px;width:13.5px;height:13px;background:#ffffff;"></div>
<svg width="14" height="14" style="left:704px;top:363px"><path d="M5.5 1.5 Q8 0.5 9.5 2.5 L10 7.5 L8.8 8 L8.5 12.5 L7 12.5 L7 9 L6 12.5 L4.5 12.5 L4.5 7 Q4 4 5.5 1.5 Z" fill="#000"/></svg>
<svg width="16" height="12" style="left:671px;top:364px"><path d="M2 6 Q7 1 12 6 Q7 11 2 6 Z" stroke="#d8dde4" stroke-width="1" fill="none"/><circle cx="7.5" cy="6" r="1.8" fill="#d8dde4"/></svg>
<div class="t" style="left:721.60px;top:364.03px;font-size:9.5px;color:#b8c0ca;font-weight:400;transform:scaleX(0.945)">Layer1</div>
<div class="a" style="left:671px;top:377px;width:129px;height:1px;background:#3a3a3a;"></div>
</body></html>
